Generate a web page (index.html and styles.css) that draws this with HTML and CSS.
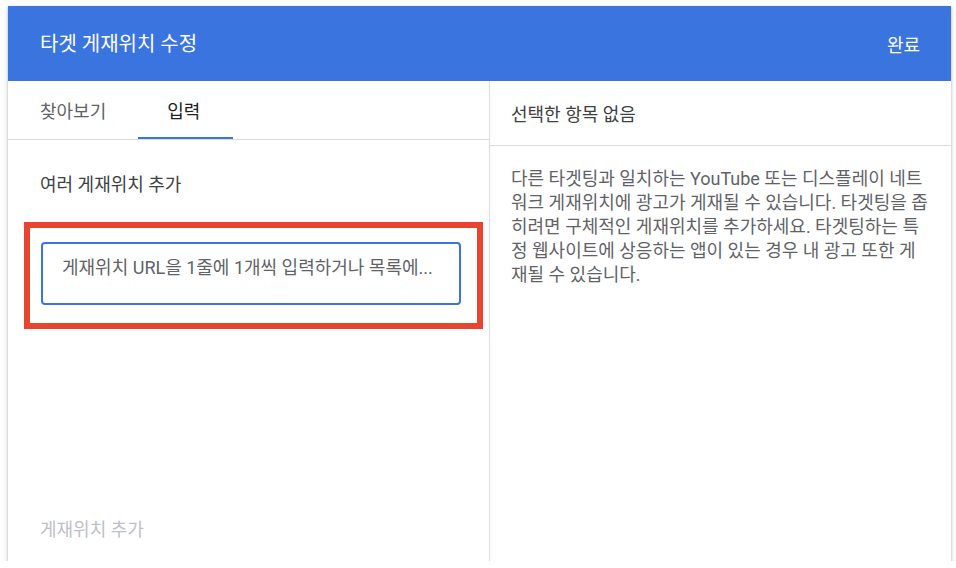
FILE: index.html
```html
<!DOCTYPE html>
<html lang="ko">
<head>
<meta charset="utf-8">
<link rel="stylesheet" href="styles.css">
</head>
<body>
<div class="page">
  <div class="dialog">
    <header class="bar">
      <div class="title">타겟 게재위치 수정</div>
      <div class="done">완료</div>
    </header>
    <div class="body">
      <section class="left">
        <nav class="tabs">
          <div class="tab">찾아보기</div>
          <div class="tab active">입력</div>
        </nav>
        <div class="left-body">
          <div class="label">여러 게재위치 추가</div>
          <div class="redbox">
            <div class="field">게재위치 URL을 1줄에 1개씩 입력하거나 목록에...</div>
          </div>
          <div class="add">게재위치 추가</div>
        </div>
      </section>
      <section class="right">
        <div class="rhead">선택한 항목 없음</div>
        <p class="desc">다른 타겟팅과 일치하는 YouTube 또는 디스플레이 네트워크 게재위치에 광고가 게재될 수 있습니다. 타겟팅을 좁히려면 구체적인 게재위치를 추가하세요. 타겟팅하는 특정 웹사이트에 상응하는 앱이 있는 경우 내 광고 또한 게재될 수 있습니다.</p>
      </section>
    </div>
  </div>
</div>
</body>
</html>
```
FILE: styles.css
```css
html, body {
  margin: 0;
  padding: 0;
  background: #ffffff;
}
body {
  font-family: Roboto, "Noto Sans CJK KR", sans-serif;
}
.page {
  padding: 6px 5px 0 8px;
}
.dialog {
  width: 943px;
  height: 555px;
  display: flex;
  flex-direction: column;
  background: #fff;
  box-shadow: 0 1px 2px rgba(60, 64, 67, 0.3), 0 2px 5px 1px rgba(60, 64, 67, 0.15);
}
.bar {
  height: 75px;
  flex: none;
  background: #3a74df;
  color: #fff;
  display: flex;
  align-items: center;
  justify-content: space-between;
  padding: 0 31px 0 32px;
}
.title {
  font-size: 20px;
  line-height: 28px;
}
.done {
  font-size: 18px;
}
.body {
  flex: 1;
  display: flex;
}
.left {
  width: 481px;
  border-right: 1px solid #dadce0;
  display: flex;
  flex-direction: column;
}
.tabs {
  height: 58px;
  display: flex;
  border-bottom: 1px solid #dadce0;
}
.tab {
  padding: 0 32px;
  display: flex;
  align-items: center;
  font-size: 18px;
  color: #5f6368;
}
.tab.active {
  color: #202124;
  padding: 0 33px 0 29px;
  box-shadow: inset 0 -2px 0 #3a74df;
}
.left-body {
  flex: 1;
  display: flex;
  flex-direction: column;
  padding: 0 6px 0 16px;
}
.label {
  margin: 33px 0 0 16px;
  font-size: 18px;
  line-height: 24px;
  color: #3c4043;
}
.redbox {
  margin-top: 25px;
  border: 6px solid #e9442f;
  padding: 14px 16px 18px 11px;
}
.field {
  box-sizing: border-box;
  height: 63px;
  border: 2px solid #3a74df;
  border-radius: 4px;
  padding: 12px 16px 0 19px;
  font-size: 18px;
  line-height: 24px;
  color: #5f6368;
  white-space: nowrap;
  overflow: hidden;
}
.add {
  margin: auto 0 19px 16px;
  font-size: 18px;
  line-height: 24px;
  color: #bdc1c6;
}
.right {
  flex: 1;
  display: flex;
  flex-direction: column;
}
.rhead {
  height: 64px;
  border-bottom: 1px solid #dadce0;
  padding-left: 21px;
  display: flex;
  align-items: center;
  font-size: 18px;
  color: #3c4043;
}
.desc {
  margin: 0;
  padding: 21px 19px 0 21px;
  font-size: 18px;
  line-height: 24px;
  color: #5f6368;
}
```
